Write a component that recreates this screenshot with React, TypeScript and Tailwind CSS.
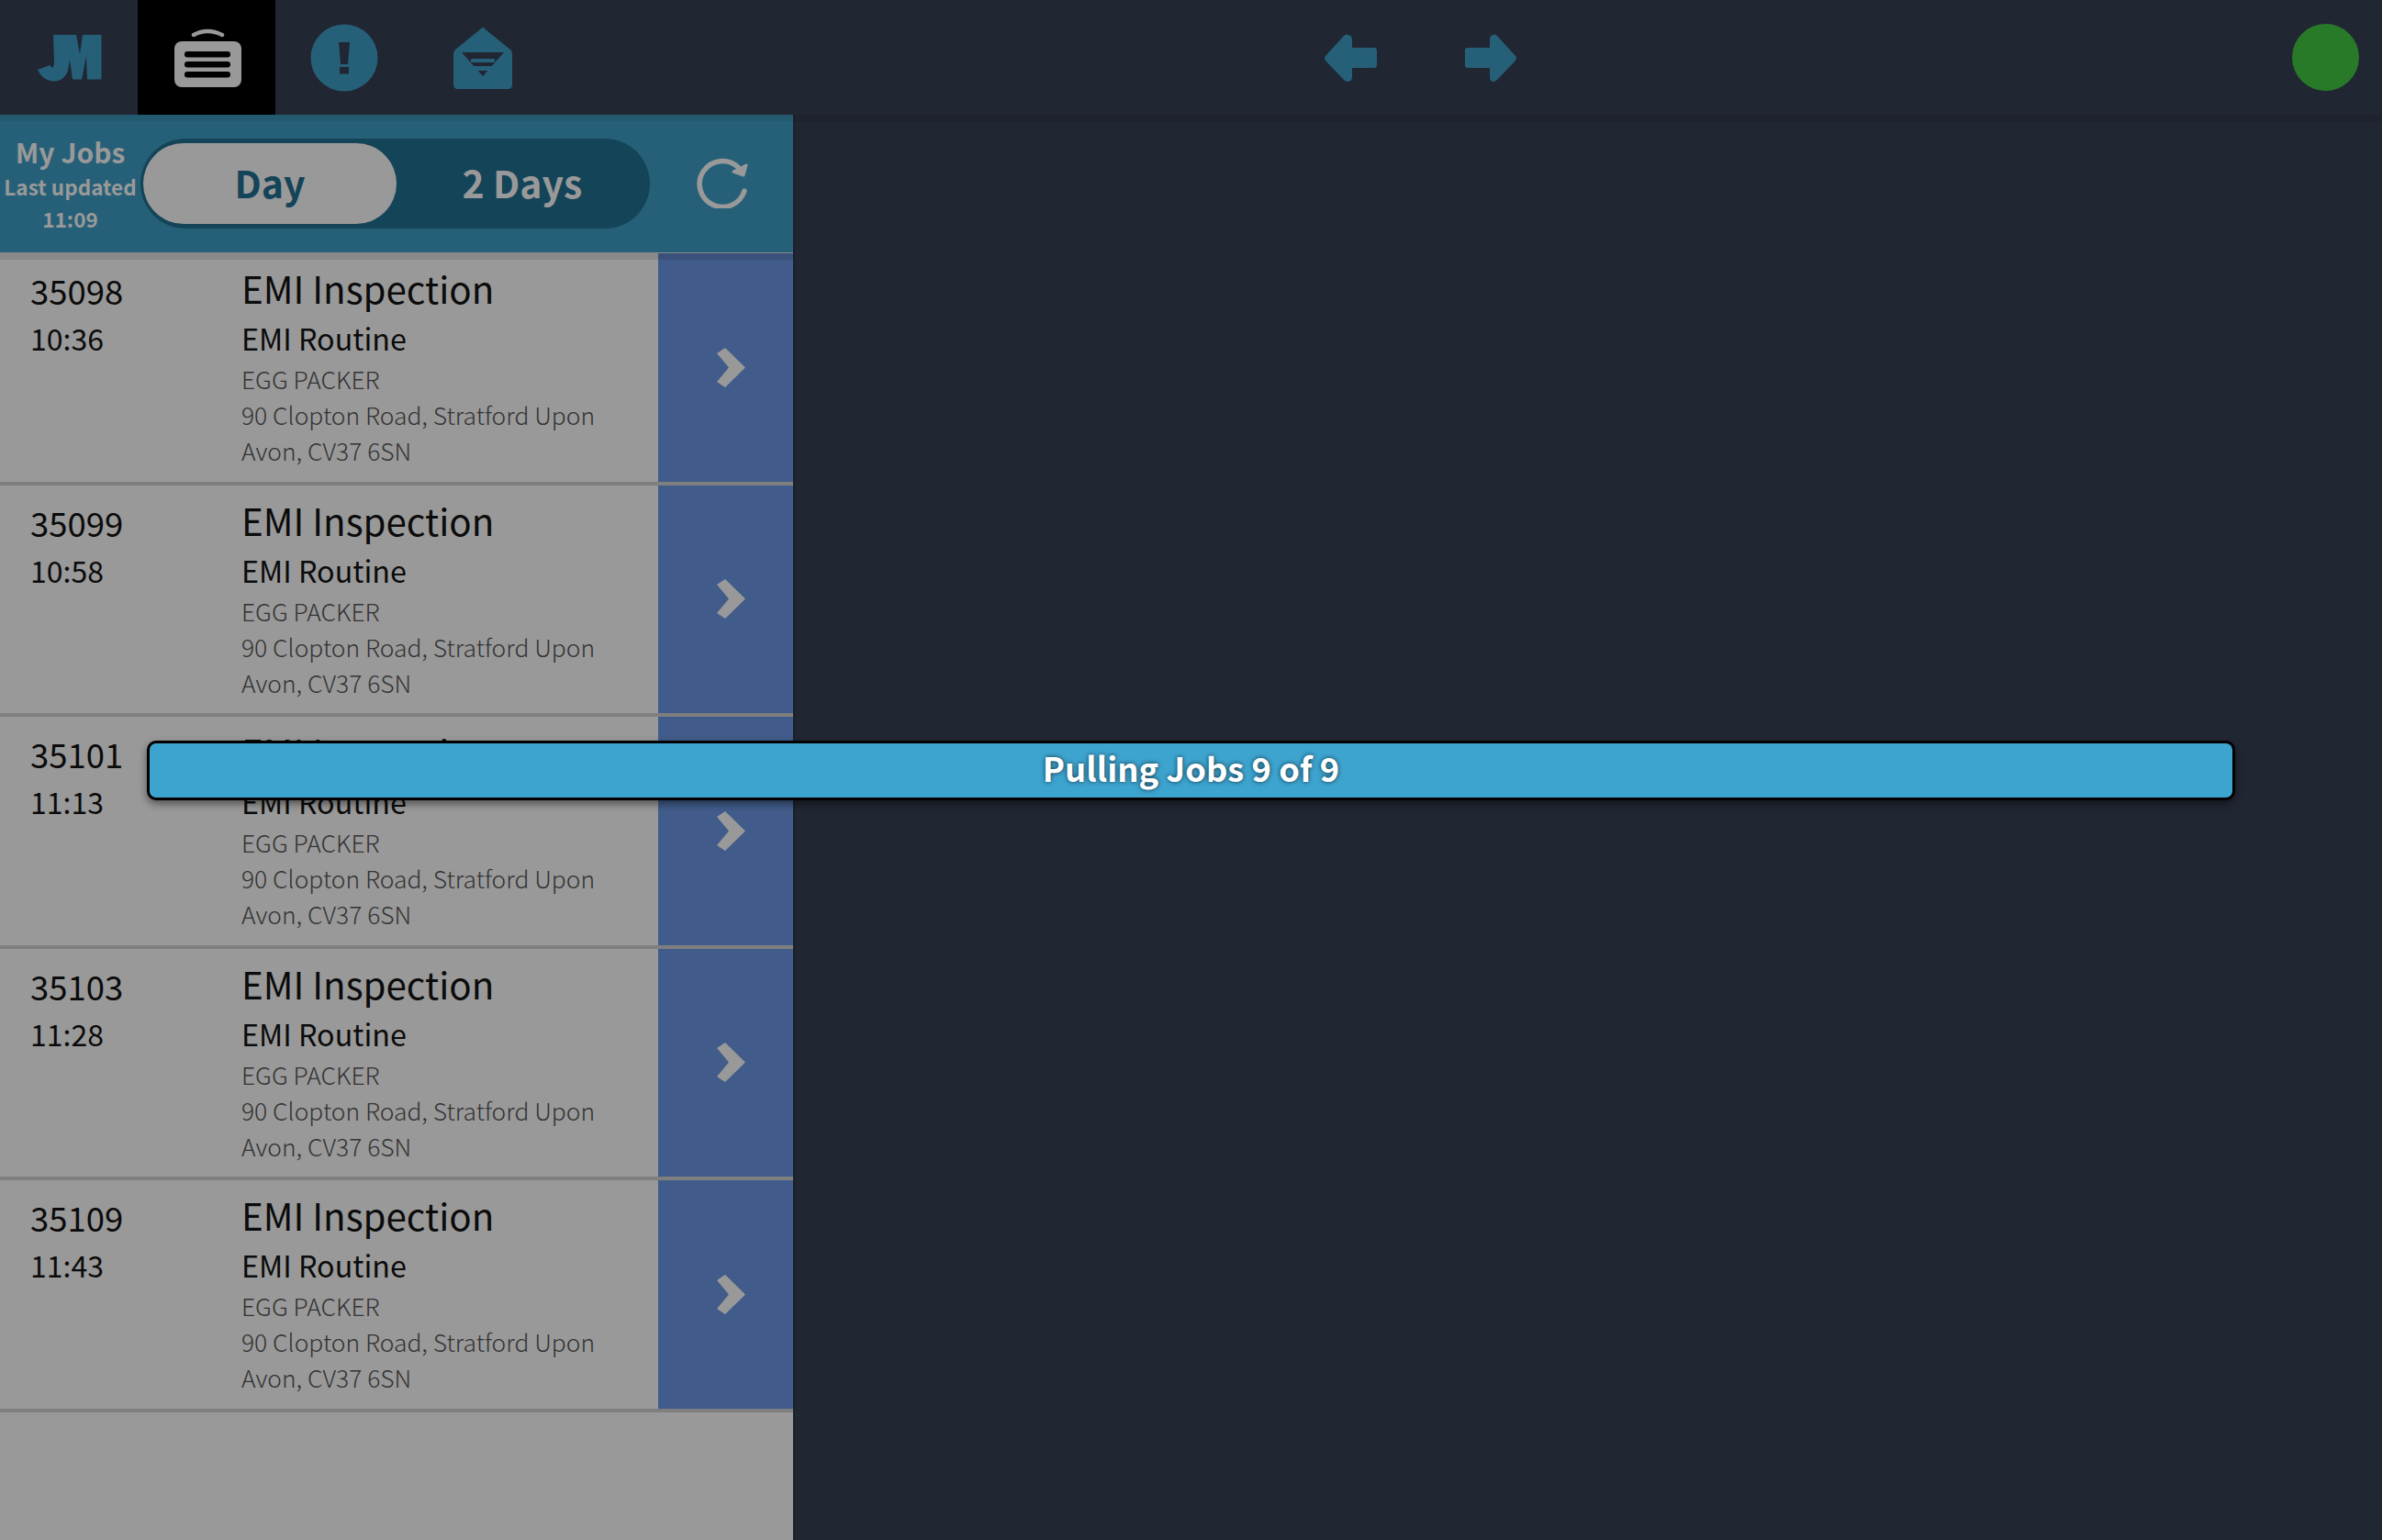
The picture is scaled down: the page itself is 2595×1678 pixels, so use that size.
import React from "react";

const FONT = "font-['Noto_Sans_CJK_SC','Noto_Sans',sans-serif]";

const jobs = [
  { id: "35098", time: "10:36" },
  { id: "35099", time: "10:58" },
  { id: "35101", time: "11:13" },
  { id: "35103", time: "11:28" },
  { id: "35109", time: "11:43" },
];

const IconSlot: React.FC<{ active?: boolean; children: React.ReactNode }> = ({ active, children }) => (
  <div className={`w-[150px] h-full flex items-center justify-center ${active ? "bg-black" : ""}`}>
    {children}
  </div>
);

const Logo = () => (
  <svg width="71" height="52" viewBox="38 40 71 52">
    <path
      fill="#266078"
      d="M56 41 L81 41 L85 62 L88 41 L108.5 41 L108.5 89.5 L93 89.5 L92 64 L87 89.5 L77 89.5 L74 68 L72 80 Q68 92 55 91.5 Q44 90 39 79 L52 74 L55 77 Q57 76 57 70 Z"
    />
  </svg>
);

const Suitcase = () => (
  <svg width="74" height="64" viewBox="188 30 74 64" className="ml-[2px]">
    <path d="M210 37 Q225 29 241 37" fill="none" stroke="#999999" strokeWidth="4.5" strokeLinecap="round" />
    <rect x="189" y="44" width="73" height="50" rx="8" fill="#999999" />
    <rect x="200" y="55" width="50" height="6.5" rx="3.2" fill="#000" />
    <rect x="200" y="66" width="50" height="6.5" rx="3.2" fill="#000" />
    <rect x="200" y="77" width="50" height="6.5" rx="3.2" fill="#000" />
  </svg>
);

const Alert = () => (
  <svg width="74" height="74" viewBox="339 25 74 74">
    <circle cx="376" cy="62" r="36.5" fill="#266078" />
    <path d="M370 45 L382 45 L380 69 L372 69 Z" fill="#212633" />
    <rect x="371" y="72" width="10" height="7.5" fill="#212633" />
  </svg>
);

const Envelope = () => (
  <svg width="66" height="68" viewBox="493 26 66 68" className="ml-[2px]">
    <path
      d="M526 27 Q527 27 530 30 L556 51 Q558 53 558 56 L558 89 Q558 94 553 94 L499 94 Q494 94 494 89 L494 56 Q494 53 496 51 L522 30 Q525 27 526 27 Z"
      fill="#266078"
    />
    <path d="M503 54 L549 54 L526 80 Z" fill="#212633" />
    <rect x="513" y="61" width="26" height="4" rx="1" fill="#266078" />
    <rect x="503" y="69" width="46" height="5" fill="#266078" />
  </svg>
);

const ArrowLeft = () => (
  <svg width="58" height="54" viewBox="1443 37 58 54">
    <path
      d="M1444 62 L1464 40 Q1466 38 1469 39 Q1473 40 1473 44 L1473 53 L1497 53 Q1500 53 1500 56 L1500 72 Q1500 75 1497 75 L1473 75 L1473 85 Q1473 89 1469 90 Q1466 90 1464 88 L1444 67 Q1442 64 1444 62 Z"
      fill="#266078"
    />
  </svg>
);

const ArrowRight = () => (
  <svg width="58" height="54" viewBox="1594 36 58 54">
    <path
      d="M1650 61 L1630 39 Q1628 37 1625 38 Q1622 39 1622 43 L1622 52 L1598 52 Q1595 52 1595 55 L1595 71 Q1595 74 1598 74 L1622 74 L1622 84 Q1622 88 1625 89 Q1628 89 1630 87 L1650 66 Q1652 63 1650 61 Z"
      fill="#266078"
    />
  </svg>
);

const Refresh = () => (
  <svg width="58" height="56" viewBox="0 0 58 56">
    <path d="M46 11 A25 25 0 1 0 53 37" fill="none" stroke="#999999" strokeWidth="5.5" strokeLinecap="round" />
    <path d="M55 9 L41 16 L52 20 Z" fill="#999999" stroke="#999999" strokeWidth="3" strokeLinejoin="round" />
  </svg>
);

const Chevron = () => (
  <svg width="31" height="43" viewBox="0 0 31 43">
    <path d="M0 6 L9 0 L31 21.5 L9 43 L0 37 L13 21.5 Z" fill="#999999" />
  </svg>
);

const JobRow: React.FC<{ id: string; time: string }> = ({ id, time }) => (
  <div className="h-[252.5px] flex border-b-[4px] border-[#7f7f7f] bg-[#999999] text-[#0b0b0b]">
    <div className="w-[263px] pl-[33px] pt-[15px]">
      <p className="text-[36.5px] leading-[52px]">{id}</p>
      <p className="text-[32px] leading-[51px]">{time}</p>
    </div>
    <div className="flex-1 min-w-0 pr-[24px] pt-[12px]">
      <p className="text-[40.3px] leading-[52px]">EMI Inspection</p>
      <p className="text-[32.3px] leading-[54px] mt-[1px]">EMI Routine</p>
      <p className="text-[26.4px] leading-[39px] font-light text-[#333333] -mt-[2px]">EGG PACKER</p>
      <p className="text-[26.4px] leading-[39px] font-light text-[#333333]">
        90 Clopton Road, Stratford Upon Avon, CV37 6SN
      </p>
    </div>
    <div className="w-[147px] bg-[#415C8A] flex items-center justify-center pl-[11px]">
      <Chevron />
    </div>
  </div>
);

export default function App() {
  return (
    <div className={`relative w-[2595px] h-[1678px] overflow-hidden bg-[#212633] flex flex-col ${FONT}`}>
      {/* Top bar */}
      <div className="h-[125px] flex items-stretch shrink-0">
        <IconSlot><Logo /></IconSlot>
        <IconSlot active><Suitcase /></IconSlot>
        <IconSlot><Alert /></IconSlot>
        <IconSlot><Envelope /></IconSlot>
        <div className="flex-1 flex items-center justify-center gap-[94px]">
          <ArrowLeft />
          <ArrowRight />
        </div>
        <div className="w-[100px] flex items-center pl-[2px]">
          <div className="w-[73px] h-[73px] rounded-full bg-[#287A28]" />
        </div>
      </div>

      <div className="flex-1 flex min-h-0 shadow-[inset_0_7px_0_#1e222d]">
        {/* Jobs sidebar */}
        <div className="w-[864px] h-full flex flex-col bg-[#999999] border-r-[2px] border-[#1b1f29] box-content">
          <div className="h-[150px] shrink-0 bg-[#266078] shadow-[inset_0_7px_0_#245a6f] flex items-center">
            <div className="w-[153px] text-center text-[#999999] font-bold whitespace-nowrap">
              <p className="text-[30px] leading-[40px]">My Jobs</p>
              <p className="text-[22.5px] leading-[36px]">Last updated</p>
              <p className="text-[22.5px] leading-[34px]">11:09</p>
            </div>
            <div className="w-[555px] h-[98px] rounded-full bg-[#144458] flex items-center pl-[3px] text-[41px] font-bold">
              <div className="w-[276px] h-[88px] rounded-full bg-[#999999] text-[#144458] flex items-center justify-center pb-[3px]">
                Day
              </div>
              <div className="flex-1 text-[#999999] text-center pr-[2px] pb-[3px]">2 Days</div>
            </div>
            <div className="flex-1 flex items-center justify-center pb-[2px] pl-[2px]">
              <Refresh />
            </div>
          </div>
          <div className="relative flex-1 min-h-0 pt-[1px]">
            {jobs.map((job) => (
              <JobRow key={job.id} id={job.id} time={job.time} />
            ))}
            <div className="absolute top-0 left-0 right-0 h-[8px] bg-black/10" />
          </div>
        </div>
        <div className="flex-1" />
      </div>

      {/* Progress toast */}
      <div className="absolute left-[160px] top-[807px] w-[2275px] h-[65px] rounded-[10px] border-[3px] border-black bg-[#3DA4CF] shadow-[0_4px_8px_rgba(0,0,0,0.45)] flex items-center justify-center pb-[7px] text-white text-[36.4px] font-bold [text-shadow:0_0_5px_rgba(0,0,0,0.7)]">
        Pulling Jobs 9 of 9
      </div>
    </div>
  );
}
